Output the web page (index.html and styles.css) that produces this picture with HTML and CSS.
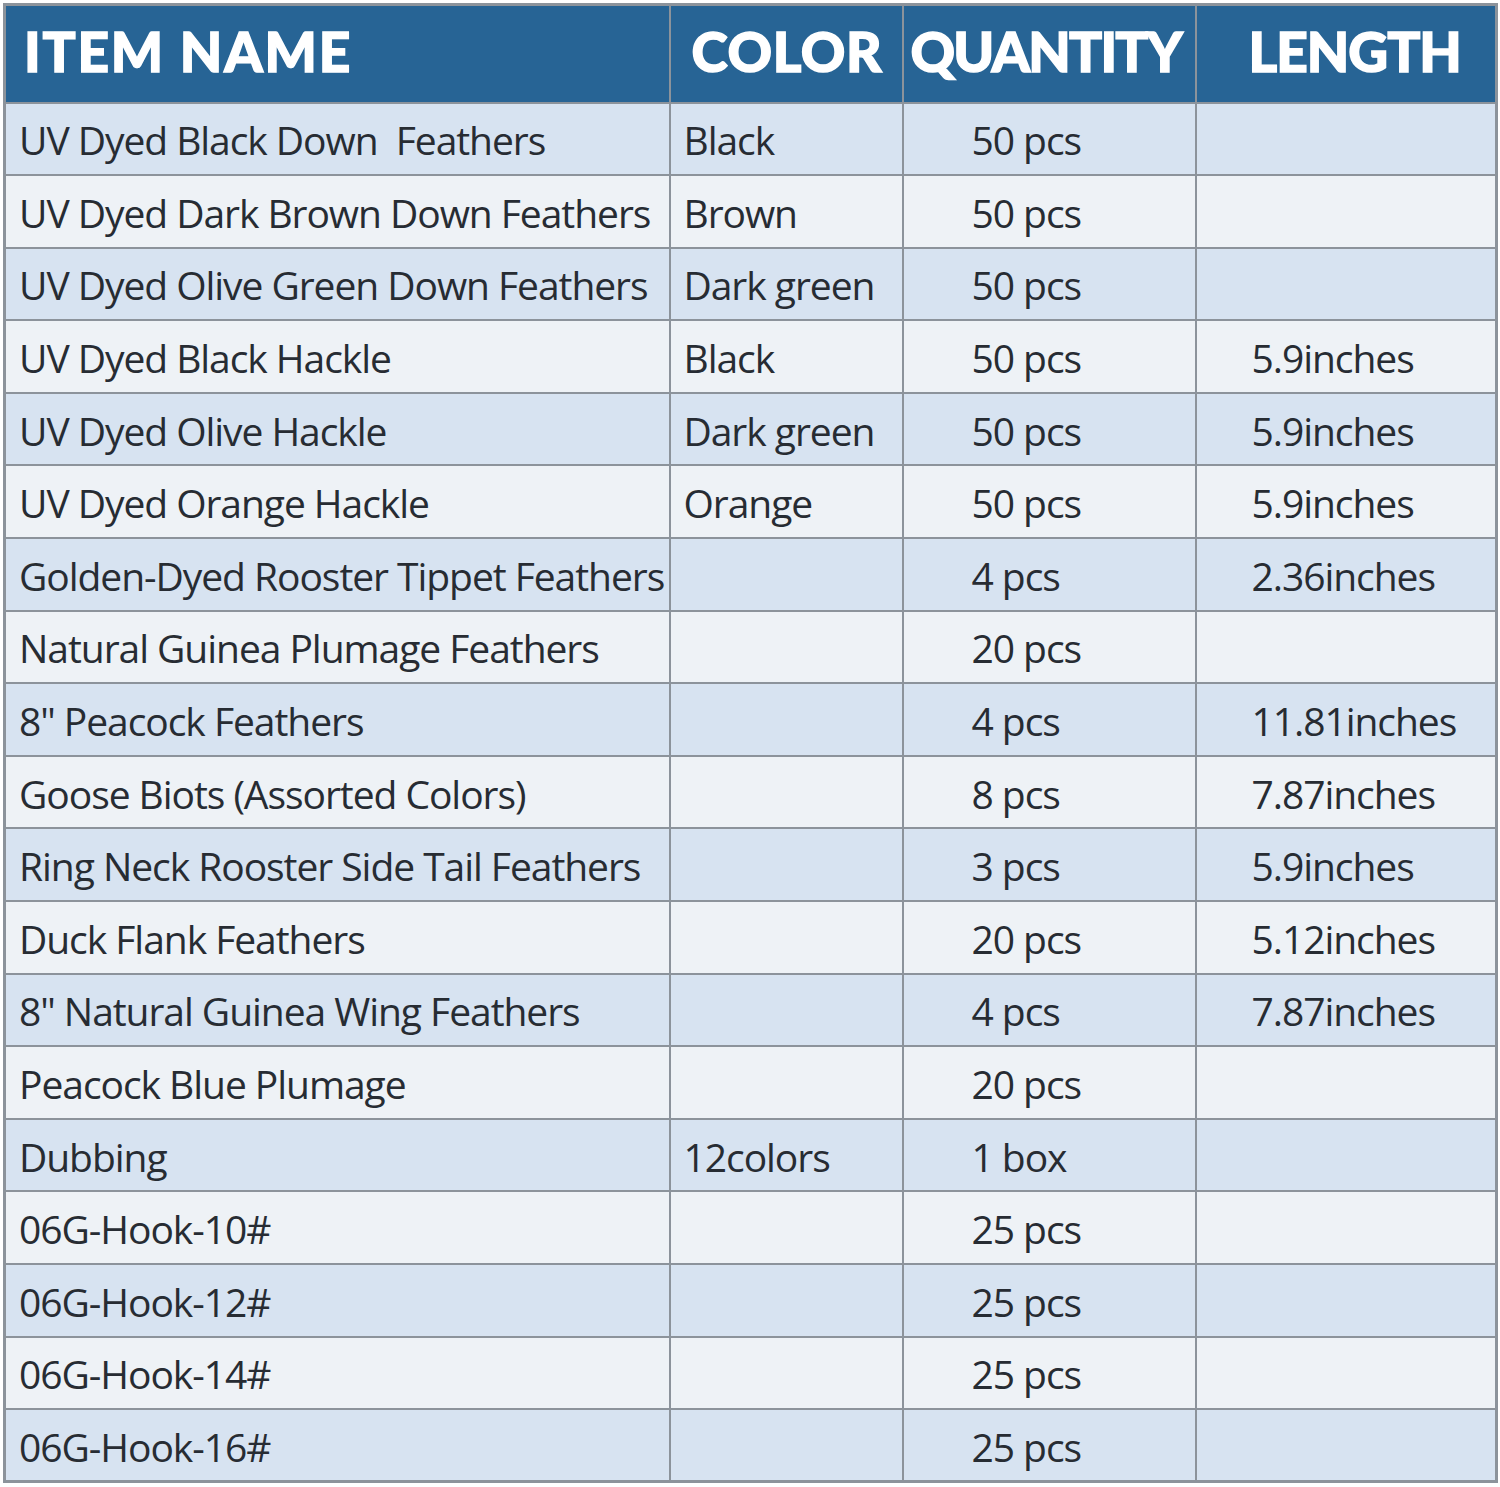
FILE: index.html
```html
<!DOCTYPE html>
<html lang="en">
<head>
<meta charset="utf-8">
<title>Fly Tying Materials</title>
<link rel="stylesheet" href="styles.css">
</head>
<body>
<table class="spec">
  <colgroup>
    <col class="c-name">
    <col class="c-color">
    <col class="c-qty">
    <col class="c-len">
  </colgroup>
  <thead>
    <tr class="head">
      <th class="h-name">ITEM NAME</th>
      <th class="h-color">COLOR</th>
      <th class="h-qty">QUANTITY</th>
      <th class="h-len">LENGTH</th>
    </tr>
  </thead>
  <tbody>
    <tr><td>UV Dyed Black Down&nbsp; Feathers</td><td>Black</td><td class="qty">50 pcs</td><td class="len"></td></tr>
    <tr><td>UV Dyed Dark Brown Down Feathers</td><td>Brown</td><td class="qty">50 pcs</td><td class="len"></td></tr>
    <tr><td>UV Dyed Olive Green Down Feathers</td><td>Dark green</td><td class="qty">50 pcs</td><td class="len"></td></tr>
    <tr><td>UV Dyed Black Hackle</td><td>Black</td><td class="qty">50 pcs</td><td class="len">5.9inches</td></tr>
    <tr><td>UV Dyed Olive Hackle</td><td>Dark green</td><td class="qty">50 pcs</td><td class="len">5.9inches</td></tr>
    <tr><td>UV Dyed Orange Hackle</td><td>Orange</td><td class="qty">50 pcs</td><td class="len">5.9inches</td></tr>
    <tr><td>Golden-Dyed Rooster Tippet Feathers</td><td></td><td class="qty">4 pcs</td><td class="len">2.36inches</td></tr>
    <tr><td>Natural Guinea Plumage Feathers</td><td></td><td class="qty">20 pcs</td><td class="len"></td></tr>
    <tr><td>8" Peacock Feathers</td><td></td><td class="qty">4 pcs</td><td class="len">11.81inches</td></tr>
    <tr><td>Goose Biots (Assorted Colors)</td><td></td><td class="qty">8 pcs</td><td class="len">7.87inches</td></tr>
    <tr><td>Ring Neck Rooster Side Tail Feathers</td><td></td><td class="qty">3 pcs</td><td class="len">5.9inches</td></tr>
    <tr><td>Duck Flank Feathers</td><td></td><td class="qty">20 pcs</td><td class="len">5.12inches</td></tr>
    <tr><td>8" Natural Guinea Wing Feathers</td><td></td><td class="qty">4 pcs</td><td class="len">7.87inches</td></tr>
    <tr><td>Peacock Blue Plumage</td><td></td><td class="qty">20 pcs</td><td class="len"></td></tr>
    <tr><td>Dubbing</td><td>12colors</td><td class="qty">1 box</td><td class="len"></td></tr>
    <tr><td>06G-Hook-10#</td><td></td><td class="qty">25 pcs</td><td class="len"></td></tr>
    <tr><td>06G-Hook-12#</td><td></td><td class="qty">25 pcs</td><td class="len"></td></tr>
    <tr><td>06G-Hook-14#</td><td></td><td class="qty">25 pcs</td><td class="len"></td></tr>
    <tr><td>06G-Hook-16#</td><td></td><td class="qty">25 pcs</td><td class="len"></td></tr>
  </tbody>
</table>
</body>
</html>
```
FILE: styles.css
```css
html, body {
  margin: 0;
  padding: 0;
  background: #ffffff;
}
body {
  padding: 3px;
}
.spec {
  width: 1492px;
  border-collapse: collapse;
  table-layout: fixed;
  border: 3px solid #8c939b;
  font-family: "Open Sans", "Noto Sans", sans-serif;
  color: #272c33;
}
.c-name { width: 665px; }
.c-color { width: 233px; }
.c-qty { width: 293px; }
.c-len { width: 301px; }

.head {
  height: 98px;
  background: #276495;
}
.head th {
  color: #ffffff;
  font-family: "Lato", "Inter", sans-serif;
  font-weight: 900;
  font-size: 55px;
  -webkit-text-stroke: 1.4px #ffffff;
  text-align: left;
  padding: 0;
  border-left: 2px solid #8c939b;
  white-space: nowrap;
  overflow: hidden;
  line-height: 1;
  padding-bottom: 4px !important;
}
.head th:first-child { border-left: none; }
.h-name { padding-left: 18px !important; letter-spacing: 1.8px; }
.h-color { padding-left: 21px !important; letter-spacing: 0.6px; }
.h-qty { padding-left: 7px !important; letter-spacing: -1.8px; }
.h-len { padding-left: 52px !important; letter-spacing: -1px; }

tbody tr { height: 72.6px; }
tbody tr:nth-child(odd) { background: #d7e3f1; }
tbody tr:nth-child(even) { background: #eef2f6; }
tbody td {
  border: 2px solid #8c939b;
  padding: 2px 0 0 13px;
  font-size: 39px;
  letter-spacing: -1.05px;
  white-space: nowrap;
  overflow: hidden;
  vertical-align: middle;
}
tbody td.qty { padding-left: 68px; }
tbody td.len { padding-left: 55px; }
```
